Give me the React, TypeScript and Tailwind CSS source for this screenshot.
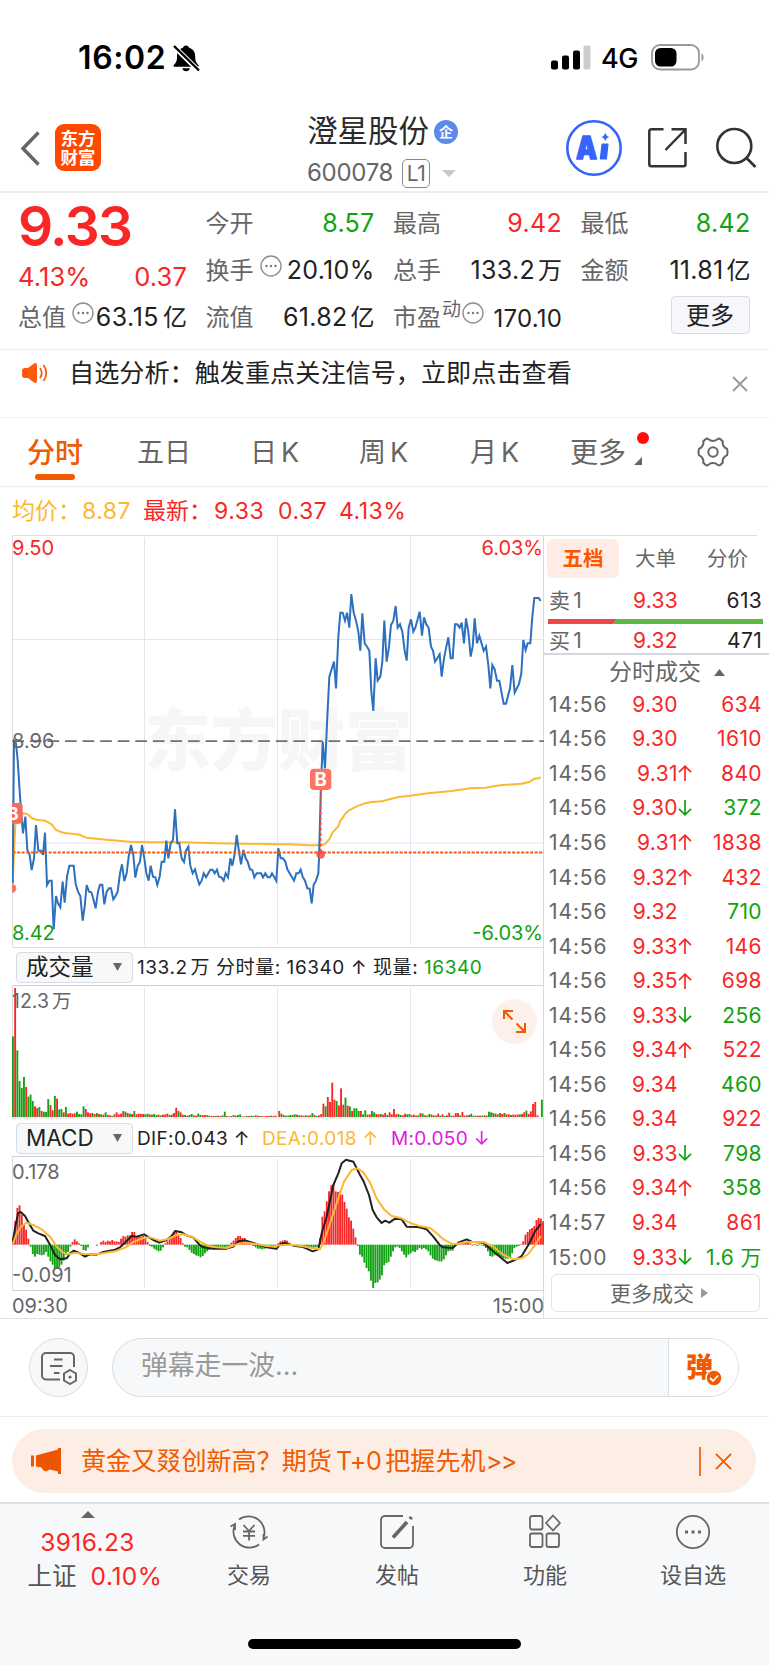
import React, { useState } from "react";

/* ---------- intraday data (x: 3 units per pixel) ---------- */

const SESSION_SHIFT = 810;

const priceMorning =
    "38,1060 42,632 48,640 53,690 62,830 69,910 76,860 82,960 89,975 95,1020 102,985 108,885 115,962 124,962 129,975 135,908 141,1065 148,1052 155,1052 161,1198 168,1098 174,1120 181,1132 188,1055 194,1118 201,1040 208,1007 221,1007 227,1062 234,1085 241,1098 248,1172 254,1130 260,1065 267,1085 274,1087 280,1107 287,1135 294,1085 300,1064 307,1064 313,1123 320,1085 327,1075 333,1075 340,1108 347,1097 353,1085 360,1030 366,1003 373,1053 380,1030 386,980 393,945 400,975 406,1043 413,1008 420,995 426,945 433,985 439,1030 446,1052 452,1007 459,1040 466,1042 472,1065 479,1040 485,995 493,995 499,932 505,985 512,940 519,930 525,838 532,940 538,940 545,985 552,996 558,962 565,950 571,1007 578,1030 585,1018 591,1042 598,1063 605,1052 611,1030 618,1042 625,1030 631,1019 638,1019 644,1030 651,1019 657,1040 664,1042 671,1052 677,1030 684,1042 691,985 697,1007 704,972 710,915 717,965 723,1003 730,960 737,985 743,995 750,1018 757,1020 763,1042 770,1030 783,1030 789,1042 796,1030 803,1042 810,1042 816,1030 823,1042 829,1053";
const priceAfternoon =
    "25,955 32,985 39,985 46,995 52,1018 72,1052 79,1030 86,1030 92,1019 98,1040 105,1052 112,1075 119,1076 125,1120 131,1064 138,1052 145,1030 147,985 152,800 158,635 165,715 172,560 178,440 192,395 198,475 205,320 211,248 218,248 225,272 231,248 238,293 244,192 251,248 258,272 265,305 271,362 277,250 284,340 291,350 298,362 304,485 310,543 317,385 323,452 331,440 337,395 343,272 350,395 357,350 363,285 370,272 377,228 383,293 390,283 397,305 404,362 410,392 416,293 423,268 430,305 436,293 449,245 456,317 462,262 469,283 476,294 483,350 489,362 495,395 502,385 509,373 515,440 522,385 529,350 535,322 542,385 548,385 555,283 562,283 569,293 575,278 582,340 588,265 595,305 602,380 608,350 614,265 621,340 628,317 641,362 648,350 655,405 661,475 667,405 674,418 681,452 688,452 694,485 701,521 708,521 720,475 727,405 734,488 747,462 754,430 760,330 767,360 773,340 781,340 787,260 793,204 806,204 812,213";

const avgMorning =
    "38,1060 46,885 55,860 68,850 82,852 96,865 110,869 135,872 155,883 168,900 180,905 195,909 240,914 250,920 260,923 320,929 390,935 450,937 550,937 650,940 740,941 829,943";
const avgAfternoon =
    "0,943 60,943 120,946 152,946 165,942 178,928 187,908 205,889 211,872 218,864 225,852 237,841 260,829 285,820 305,816 335,814 365,806 385,801 420,797 480,789 545,783 600,775 645,773 690,766 755,761 780,755 793,746 806,745 812,741";

const difMorning =
    "38,905 46,860 54,820 62,816 75,828 90,855 100,872 115,880 135,888 150,914 165,945 180,958 200,955 210,940 222,932 240,940 255,950 270,943 290,944 310,936 345,929 360,922 375,908 395,888 410,890 432,883 448,893 460,900 478,908 500,900 515,888 525,873 545,877 560,886 580,893 598,914 610,922 640,926 680,926 700,920 715,904 735,901 755,907 775,914 800,922 829,926";
const difAfternoon =
    "20,926 30,913 45,909 70,917 95,920 110,926 128,934 145,928 155,880 170,830 190,735 205,700 215,670 228,659 250,665 270,705 280,722 297,765 308,810 320,832 335,849 345,842 358,848 375,836 395,838 410,860 445,861 470,868 490,890 510,916 520,922 548,924 565,908 590,898 605,905 640,908 665,930 695,955 712,969 735,960 755,948 775,915 795,875 812,852";
const deaMorning =
    "38,912 50,880 65,858 80,848 100,855 125,868 150,890 170,920 190,938 205,943 225,938 250,942 290,943 345,934 375,923 400,906 430,894 450,892 480,902 505,897 530,885 550,883 575,890 600,905 625,918 650,922 680,924 710,913 740,908 770,912 800,918 829,920";
const deaAfternoon =
    "20,917 30,916 60,914 95,918 130,925 150,928 160,910 175,865 200,790 222,725 245,690 262,685 280,697 300,728 320,775 342,808 365,828 395,835 420,849 445,857 480,864 500,880 520,898 545,911 560,912 590,906 640,906 670,920 700,944 730,958 755,955 775,942 795,915 812,888";

// positive = red bar, negative = green bar
const volMorning = [
    -242, 387, -200, -108, -87, -120, 90, -61, -67, -48, 32, 27, -30, 18, -16, -15, -54, 36, 20, -63,
    55, -23, -24, 14, -30, 10, 12, 10, 11, -16, -9, -8, -32, 24, 14, 11, -12, 9, -12, 9,
    -8, 7, -14, 6, 5, -3, 8, 14, 7, 10, 18, -16, 12, -10, 9, -18, 8, 10, 9, 9,
    -8, -10, 8, -7, -9, -6, 7, -5, 7, 8, 10, -6, 7, 12, 28, -18, 14, 7, -6, 4,
    -6, -9, 5, 4, -10, -6, 5, 6, 5, -4, 3, 3, -3, 4, 3, -5, -16, 3, 2, -3,
    6, -4, -6, -8, 2, 2, -3, 3, -4, -3, 5, 4, -3, 3, 2, 3, 3, -4, 3, 4,
];
const volAfternoon = [
    18, -10, 6, -4, -4, -6, -6, -8, 7, -5, 5, -4, 5, 4, -5, -12, 6, -3, 5, 9,
    40, -32, 60, 45, 103, 52, -48, 35, 86, 37, -58, 34, -32, 18, -26, -26, -18, 18, -8, -20,
    7, 8, -18, -14, 9, 8, -9, 7, 12, -6, 14, 8, 24, 8, -9, -6, 5, 10, -8, -9,
    5, 7, 4, -5, 12, -10, 5, -4, -9, 7, -5, 4, 10, -4, 8, -3, 5, 13, -4, 4,
    12, 12, -5, 15, 4, 5, -6, -10, 4, -4, 4, 4, -4, 5, 4, -16, -14, -12, 10, -8,
    12, 9, -12, 8, 8, -6, 7, 7, 7, -8, 9, 14, -19, 9, 17, 39, 45, 5, 0, -52,
];

const macdMorning = [
    20, 70, 110, 118, 90, 62, 45, 18, -6, -28, -36, -28, -30, -32, -30, -22, -36, -50, -60, -72,
    -72, -68, -60, -48, -30, -22, -6, 8, 16, 10, 4, -4, -16, -18, -8, 0, 0, 0, -3, 0,
    8, 12, 8, 12, 10, 14, 10, 10, 8, 18, 26, 24, 28, 28, 38, 38, 26, 26, 24, 26,
    20, 8, -4, -6, -12, -16, -20, -18, -8, 4, 10, 18, 30, 34, 42, 28, 20, 4, -6, -8,
    -16, -24, -28, -32, -34, -38, -34, -26, -20, -16, -12, -10, -8, -8, -8, -8, -8, -6, -4, 6,
    12, 20, 26, 26, 20, 20, 14, 10, 2, -4, -8, -12, -12, -14, -12, -10, -10, -8, -6, -3,
];
const macdAfternoon = [
    4, 10, 12, 14, 12, 6, 2, -2, -3, -4, -4, -4, -4, -6, -8, -10, -10, -8, -6, 20,
    84, 100, 130, 160, 178, 182, 160, 158, 160, 150, 128, 108, 82, 72, 48, 22, -4, -30, -36, -54,
    -70, -80, -108, -130, -115, -113, -105, -92, -62, -55, -52, -36, -20, -8, -6, -10, -20, -30, -38, -30,
    -26, -20, -22, -16, -10, -14, -10, -14, -20, -32, -42, -46, -48, -50, -50, -44, -32, -20, -18, -18,
    -4, 4, 6, 8, 8, 8, 6, 4, -3, 2, -3, -2, -2, -4, -10, -20, -34, -36, -32, -32,
    -34, -38, -40, -42, -42, -40, -26, -10, -6, -4, 2, 10, 30, 38, 46, 50, 56, 74, 80, 78, 70,
];

const shift = (points: string) =>
    points
        .split(" ")
        .map((p) => {
            const [x, y] = p.split(",").map(Number);
            return `${x + SESSION_SHIFT},${y}`;
        })
        .join(" ");

const pricePoints = `${priceMorning} ${shift(priceAfternoon)}`;
const avgPoints = `${avgMorning} ${shift(avgAfternoon)}`;
const difPoints = `${difMorning} ${shift(difAfternoon)}`;
const deaPoints = `${deaMorning} ${shift(deaAfternoon)}`;

const RED = "#f92626";
const GREEN = "#10a210";

const trades = [
    { time: "14:56", price: "9.30", dir: "", vol: "634", up: true },
    { time: "14:56", price: "9.30", dir: "", vol: "1610", up: true },
    { time: "14:56", price: "9.31", dir: "up", vol: "840", up: true },
    { time: "14:56", price: "9.30", dir: "down", vol: "372", up: false },
    { time: "14:56", price: "9.31", dir: "up", vol: "1838", up: true },
    { time: "14:56", price: "9.32", dir: "up", vol: "432", up: true },
    { time: "14:56", price: "9.32", dir: "", vol: "710", up: false },
    { time: "14:56", price: "9.33", dir: "up", vol: "146", up: true },
    { time: "14:56", price: "9.35", dir: "up", vol: "698", up: true },
    { time: "14:56", price: "9.33", dir: "down", vol: "256", up: false },
    { time: "14:56", price: "9.34", dir: "up", vol: "522", up: true },
    { time: "14:56", price: "9.34", dir: "", vol: "460", up: false },
    { time: "14:56", price: "9.34", dir: "", vol: "922", up: true },
    { time: "14:56", price: "9.33", dir: "down", vol: "798", up: false },
    { time: "14:56", price: "9.34", dir: "up", vol: "358", up: false },
    { time: "14:57", price: "9.34", dir: "", vol: "861", up: true },
    { time: "15:00", price: "9.33", dir: "down", vol: "1.6 万", up: false },
];

/* ---------- small pieces ---------- */

const Bars = ({ data, start, base }: { data: number[]; start: number; base: number }) => (
    <>
        {data.map((v, i) => (
            <rect
                key={i}
                x={start + i * 6.62}
                y={base - Math.abs(v)}
                width={5.6}
                height={Math.abs(v)}
                fill={v > 0 ? RED : GREEN}
            />
        ))}
    </>
);

const SignedBars = ({ data, start, base }: { data: number[]; start: number; base: number }) => (
    <>
        {data.map((v, i) => (
            <rect
                key={i}
                x={start + i * 6.62}
                y={v > 0 ? base - v : base}
                width={5.6}
                height={Math.abs(v)}
                fill={v > 0 ? RED : GREEN}
            />
        ))}
    </>
);

const GridLines = ({ top, bottom }: { top: number; bottom: number }) => (
    <g stroke="#e3e6f0" strokeWidth={3}>
        <path d={`M433.5 ${top}V${bottom}M832.5 ${top}V${bottom}M1231.5 ${top}V${bottom}`} />
    </g>
);

const Dots = () => (
    <svg className="h-[22px] w-[22px] shrink-0" viewBox="0 0 22 22">
        <circle cx="11" cy="11" r="10" fill="none" stroke="#8f8f8f" strokeWidth="1.4" />
        <circle cx="6.5" cy="11" r="1.2" fill="#777" />
        <circle cx="11" cy="11" r="1.2" fill="#777" />
        <circle cx="15.5" cy="11" r="1.2" fill="#777" />
    </svg>
);

const Arrow = ({ dir }: { dir: string }) => (
    <svg
        className={dir === "up" ? "h-[16px] w-[14px]" : "h-[16px] w-[14px] rotate-180"}
        viewBox="0 0 14 16"
        fill="none"
        stroke={dir === "up" ? RED : GREEN}
        strokeWidth="1.7"
    >
        <path d="M7 16V1.5M1 7.2L7 1.2L13 7.2" />
    </svg>
);

const Quote = ({
    label,
    value,
    unit,
    color = "text-[#222]",
}: {
    label: React.ReactNode;
    value: string;
    unit?: string;
    color?: string;
}) => (
    <div className="flex h-[47px] items-center justify-between whitespace-nowrap leading-none">
        <span className="flex items-center text-[24px] text-[#666]">{label}</span>
        <span className={`mr-[-1px] flex items-center text-[25px] tracking-[0.3px] ${color}`}>
            {value}
            {unit && <span className="ml-[3px] text-[24px] tracking-normal">{unit}</span>}
        </span>
    </div>
);

const Selector = ({ text }: { text: string }) => (
    <div className="flex h-[31px] w-[117px] items-center justify-between rounded-[4px] border border-[#d8dce4] bg-[#f7f8fa] pl-[9px] pr-[10px] text-[22.5px] leading-none tracking-normal text-[#222]">
        {text}
        <svg className="h-[8px] w-[9px]" viewBox="0 0 9 8">
            <path d="M0 0H9L4.5 8Z" fill="#666" />
        </svg>
    </div>
);

const NavItem = ({ label, children }: { label: string; children: React.ReactNode }) => (
    <div className="flex flex-1 flex-col items-center">
        <svg
            className="mt-[10px] h-[36px] w-[40px]"
            viewBox="0 0 40 36"
            fill="none"
            stroke="#666"
            strokeWidth="1.8"
        >
            {children}
        </svg>
        <span className="mt-[13px] text-[22px] leading-[24px] text-[#555]">{label}</span>
    </div>
);

/* ---------- page ---------- */

const App: React.FC = () => {
    const [period, setPeriod] = useState("分时");

    return (
        <div className="flex h-[1665px] w-[769px] flex-col overflow-hidden bg-white font-['Inter','Noto_Sans_CJK_SC',sans-serif] text-[#222]">
            {/* Status bar */}
            <div className="flex h-[115px] shrink-0 items-center pl-[78px] leading-none">
                <span className="w-[95px] text-[32px] font-semibold tracking-[0.6px] text-black">16:02</span>
                <svg className="h-[28px] w-[28px]" viewBox="0 0 28 28">
                    <path
                        d="M13 1.5c1.8 0 2.6 1 3 2.2 4 1 6.200 4.200 6.200 8.600 0 5 1 6.500 3.200 8.700 .6 .7 .2 1.800-.9 1.800H1.700C.5 22.800 .1 21.600 .9 20.900 3.300 18.600 4 17 4 12.300c0-4.400 2.200-7.500 6-8.600 .4-1.200 1.200-2.200 3-2.200ZM9.300 24.300h7.600c-.4 1.800-1.900 3-3.800 3s-3.400-1.200-3.800-3Z"
                        fill="#000"
                    />
                    <path d="M1 2.500L26 27" stroke="#fff" strokeWidth="5" />
                    <path d="M1 2L26 26.500" stroke="#000" strokeWidth="2.400" />
                </svg>
                <svg className="ml-[350px] h-[25px] w-[40px]" viewBox="0 0 40 25">
                    <rect x="0" y="15.500" width="7" height="9" rx="2" fill="#000" />
                    <rect x="11" y="10.500" width="7" height="14" rx="2" fill="#000" />
                    <rect x="22" y="5.500" width="7" height="19" rx="2" fill="#000" />
                    <rect x="32.500" y="0.500" width="7" height="24" rx="2" fill="#ccc" />
                </svg>
                <span className="ml-[10px] w-[50px] pt-[1px] text-[27px] font-medium tracking-[-0.5px] text-black">4G</span>
                <svg className="h-[27px] w-[54px]" viewBox="0 0 54 27">
                    <rect x="1" y="1" width="47" height="24.500" rx="8" fill="none" stroke="#999" strokeWidth="1.800" />
                    <rect x="4" y="4" width="21.500" height="18.500" rx="5.500" fill="#000" />
                    <path d="M50.500 9.500c2.800 .8 2.800 7 0 7.800Z" fill="#999" />
                </svg>
            </div>

            {/* Title bar */}
            <div className="flex h-[78px] shrink-0 border-b-2 border-[#eee] pl-[20px]">
                <svg className="mt-[16px] h-[35px] w-[20px]" viewBox="0 0 20 35" fill="none" stroke="#666" strokeWidth="3.500">
                    <path d="M18.500 1.500L3 17.500L18.500 33.500" />
                </svg>
                <div className="ml-[15px] mt-[9px] flex h-[47px] w-[46px] flex-col items-center justify-center rounded-[9px] bg-[#ff4800] text-[17.5px] font-bold leading-[19px] text-white">
                    <span>东方</span>
                    <span>财富</span>
                </div>
                <div className="ml-[206px] w-[259px] pt-[1px]">
                    <div className="flex h-[31px] items-center text-[30.500px] leading-none text-[#2b2b2b]">
                        澄星股份
                        <span className="ml-[5px] flex h-[24px] w-[24px] items-center justify-center rounded-full bg-[#5b8ae8] text-[14px] font-bold text-white">
                            企
                        </span>
                    </div>
                    <div className="mt-[11px] flex h-[30px] items-center text-[24px] leading-none text-[#666]">
                        <span className="w-[95px] tracking-[-0.300px]">600078</span>
                        <span className="flex h-[29px] w-[28px] items-center justify-center rounded-[5px] border-[1.500px] border-[#888] text-[21px] tracking-[-0.5px]">
                            L1
                        </span>
                        <svg className="ml-[12px] h-[7px] w-[14px]" viewBox="0 0 14 7">
                            <path d="M0 0H14L7 7Z" fill="#c8c8c8" />
                        </svg>
                    </div>
                </div>
                <svg className="mt-[5px] h-[56px] w-[56px]" viewBox="0 0 56 56">
                    <circle cx="28" cy="28" r="26.700" fill="none" stroke="#3464fb" strokeWidth="2.600" />
                    <text x="10" y="38.500" fontSize="31" fontWeight="900" fill="#3464fb" stroke="#3464fb" strokeWidth="1.500" strokeLinejoin="round" textLength="21" lengthAdjust="spacingAndGlyphs">
                        A
                    </text>
                    <path d="M36.200 24.300H41.800L40.200 38.800H34.500Z" fill="#3464fb" stroke="#3464fb" strokeWidth="1.500" strokeLinejoin="round" />
                    <path d="M39.300 12.500c.8 3 1.500 3.700 4.500 4.500-3 .8-3.700 1.500-4.500 4.500-.8-3-1.500-3.700-4.500-4.500 3-.8 3.700-1.500 4.500-4.500Z" fill="#3464fb" />
                </svg>
                <svg className="ml-[26px] mt-[13px] h-[41px] w-[41px]" viewBox="0 0 41 41" fill="none" stroke="#333" strokeWidth="2.500">
                    <path d="M15.500 1.300H3.300a2 2 0 0 0-2 2V36.300a2 2 0 0 0 2 2H35.500a2 2 0 0 0 2-2V24" />
                    <path d="M17.500 22L37 2M23.500 1.300H37.500V16" />
                </svg>
                <svg className="ml-[27px] mt-[12px] h-[41px] w-[41px]" viewBox="0 0 41 41" fill="none" stroke="#333" strokeWidth="2.600">
                    <circle cx="18.300" cy="19" r="17" />
                    <path d="M30.500 31L39.500 40" />
                </svg>
            </div>

            {/* Quote summary */}
            <div className="grid h-[157px] shrink-0 grid-cols-[168px_168px_168px_169px] gap-x-[19.500px] border-b border-[#eee] pl-[18px] pt-[7px]">
                <div>
                    <div className="flex h-[52px] items-center text-[55px] font-semibold leading-none tracking-[-1.600px] text-[#f92626]">
                        9.33
                    </div>
                    <div className="mr-[-1px] flex h-[42px] items-end justify-between pb-[5px] text-[25.500px] leading-none tracking-[0.100px] text-[#f92626]">
                        <span>4.13%</span>
                        <span>0.37</span>
                    </div>
                    <div className="mr-[-1px] flex h-[47px] items-center whitespace-nowrap text-[24px] leading-none">
                        <span className="w-[54px] text-[#666]">总值</span>
                        <span className="mt-[-9px]">
                            <Dots />
                        </span>
                        <span className="ml-auto text-[25px] tracking-[0.500px]">63.15</span>
                        <span className="ml-[4px]">亿</span>
                    </div>
                </div>
                <div>
                    <Quote label="今开" value="8.57" color="text-[#10a210]" />
                    <Quote
                        label={
                            <>
                                换手
                                <span className="ml-[6px] mt-[-10px]">
                                    <Dots />
                                </span>
                            </>
                        }
                        value="20.10%"
                    />
                    <Quote label="流值" value="61.82" unit="亿" />
                </div>
                <div>
                    <Quote label="最高" value="9.42" color="text-[#f92626]" />
                    <Quote label="总手" value="133.2" unit="万" />
                    <div className="mr-[-1px] flex h-[47px] items-center whitespace-nowrap text-[24px] leading-none">
                        <span className="text-[#666]">市盈</span>
                        <span className="mt-[-16px] ml-[1px] w-[20px] text-[19px] text-[#666]">动</span>
                        <span className="mt-[-9px]">
                            <Dots />
                        </span>
                        <span className="ml-auto mt-[2px] text-[24px] tracking-[0.200px]">170.10</span>
                    </div>
                </div>
                <div>
                    <Quote label="最低" value="8.42" color="text-[#10a210]" />
                    <Quote label="金额" value="11.81" unit="亿" />
                    <div className="flex justify-end pt-[2px]">
                        <button className="h-[38px] w-[79px] rounded-[4px] border border-[#d8dce4] bg-[#f6f7fa] pt-[2px] text-[24px] leading-none text-[#222]">
                            更多
                        </button>
                    </div>
                </div>
            </div>

            {/* Signal notice */}
            <div className="flex h-[68px] shrink-0 border-b border-[#f0f0f0] pl-[22px] leading-none">
                <svg className="mt-[12px] h-[22px] w-[27px]" viewBox="0 0 27 22">
                    <path d="M0 8.500Q0 6 3 6H6L12 1.500Q15 0 15 3.500V18.500Q15 22 12 20.500L6 16H3Q0 16 0 13.500Z" fill="#fe5a0b" />
                    <path d="M18 6Q21.500 11 18 16M21.500 3Q27 11 21.500 19" fill="none" stroke="#fe5a0b" strokeWidth="1.800" />
                </svg>
                <span className="ml-[20px] mt-[11px] text-[25.150px]">自选分析：触发重点关注信号，立即点击查看</span>
                <svg className="ml-auto mr-[21px] mt-[26px] h-[16px] w-[16px]" viewBox="0 0 16 16" fill="none" stroke="#999" strokeWidth="1.900">
                    <path d="M1 1L15 15M15 1L1 15" />
                </svg>
            </div>

            {/* Period tabs */}
            <div className="flex h-[69px] shrink-0 items-start border-b border-[#eee] pt-[19px] text-[27px] leading-[32px] text-[#666]">
                <button
                    onClick={() => setPeriod("分时")}
                    className="ml-[27px] flex w-[110px] flex-col items-start text-[28px] font-medium text-[#f05a00]"
                >
                    分时
                    {period === "分时" && <span className="ml-[8px] mt-[5px] h-[6px] w-[40px] rounded-full bg-[#f05a00]" />}
                </button>
                <span className="w-[113px]">五日</span>
                <span className="w-[109px]">
                    日<span className="ml-[4px]">K</span>
                </span>
                <span className="w-[111px]">
                    周<span className="ml-[4px]">K</span>
                </span>
                <span className="w-[100px]">
                    月<span className="ml-[4px]">K</span>
                </span>
                <span className="w-[64px] text-[28px]">更多</span>
                <span className="flex w-[63px] flex-col">
                    <span className="ml-[3px] mt-[-5px] h-[12px] w-[12px] rounded-full bg-[#ff0d0d]" />
                    <svg className="mt-[13px] h-[8px] w-[8px]" viewBox="0 0 8 8">
                        <path d="M8 0V8H0Z" fill="#666" />
                    </svg>
                </span>
                <svg className="h-[30px] w-[32px]" viewBox="0 0 32 30" fill="none" stroke="#666" strokeWidth="2">
                    <path d="M11.500 2.200c1 1.200 2.600 1.700 4.500 1.700s3.500-.5 4.500-1.700q1.500-1.200 3 .1l2.300 2.100c-.5 1.800 0 3.300 .9 4.700 .9 1.400 2 2.300 3.300 2.700q1 3.200 0 6.400c-1.300 .4-2.400 1.300-3.300 2.700-.9 1.400-1.400 2.900-.9 4.700l-2.300 2.100q-1.500 1.300-3 .1c-1-1.200-2.600-1.700-4.500-1.700s-3.500 .5-4.500 1.700q-1.500 1.200-3-.1l-2.300-2.100c.5-1.800 0-3.300-.9-4.700-.9-1.400-2-2.300-3.300-2.700q-1-3.200 0-6.400c1.300-.4 2.400-1.300 3.300-2.700 .9-1.400 1.400-2.900 .9-4.700l2.300-2.100q1.500-1.300 3-.1Z" />
                    <circle cx="16" cy="15" r="4.700" />
                </svg>
            </div>

            {/* Average / latest line */}
            <div className="flex h-[48px] shrink-0 items-center pl-[12px] text-[23px] leading-none tracking-[0.500px] text-[#f92626]">
                <span className="w-[70px] tracking-normal text-[#fdb832]">均价：</span>
                <span className="w-[61px] text-[#fdb832]">8.87</span>
                <span className="w-[71px] tracking-normal">最新：</span>
                <span className="w-[64px]">9.33</span>
                <span className="w-[61px]">0.37</span>
                <span>4.13%</span>
            </div>

            {/* Charts + order book */}
            <div className="flex h-[784px] shrink-0 border-b border-[#dfe2e6]">
                <div className="w-[544px] border-r border-[#d8dae0] pl-[12px]">
                    {/* Price chart */}
                    <div className="relative h-[413px]">
                        <span className="absolute left-[132px] top-[162px] text-[67px] font-black leading-[88px] text-[#f6f6f6]">
                            东方财富
                        </span>
                        <svg className="absolute left-0 top-0 h-[413px] w-[532px]" viewBox="36 15 1596 1239" fill="none">
                            <GridLines top={22} bottom={1246} />
                            <path d="M36 328.500H1632M36 939H1632" stroke="#e3e6f0" strokeWidth="3" />
                            <path d="M37.500 16.500H1632M37.500 1252.500H1632M37.500 15V1252" stroke="#dedfe3" strokeWidth="3" />
                            <path d="M36 633.500H1632" stroke="#707070" strokeWidth="5" strokeDasharray="35 17.700" strokeDashoffset="-1" />
                            <polyline points={avgPoints} stroke="#fdb832" strokeWidth="6" strokeLinejoin="round" />
                            <polyline points={pricePoints} stroke="#2d70be" strokeWidth="6" strokeLinejoin="miter" />
                            <path d="M38 967.500H1632" stroke="#f4590c" strokeWidth="6" strokeDasharray="9 4.500" />
                            <path d="M962 780V970" stroke="#f04e40" strokeWidth="5" strokeDasharray="10 6" />
                            <circle cx="962" cy="973" r="13" fill="#f04e40" fillOpacity="0.850" />
                            <path d="M36 1062a13 13 0 0 1 0 26Z" fill="#fd7464" />
                            <rect x="930" y="716" width="64" height="64" rx="12" fill="#fd7464" />
                            <text x="962" y="768" fontSize="56" fontWeight="700" fill="#fff" textAnchor="middle">
                                B
                            </text>
                            <path d="M36 819H58a10 10 0 0 1 10 10V871a10 10 0 0 1-10 10H36Z" fill="#f56a5e" />
                            <text x="38" y="869" fontSize="54" fontWeight="700" fill="#fff" textAnchor="middle">
                                B
                            </text>
                        </svg>
                        <span className="absolute left-0 top-[3px] text-[20px] leading-[20px] text-[#f92626]">9.50</span>
                        <span className="absolute right-0 top-[3px] text-[20px] leading-[20px] text-[#f92626]">6.03%</span>
                        <span className="absolute left-0 top-[196px] text-[20px] leading-[20px] text-[#666]">8.96</span>
                        <span className="absolute left-0 top-[388px] text-[20px] leading-[20px] text-[#10a210]">8.42</span>
                        <span className="absolute right-0 top-[388px] text-[20px] leading-[20px] text-[#10a210]">-6.03%</span>
                    </div>

                    {/* Volume */}
                    <div className="flex h-[37px] items-center whitespace-pre pl-[4px] pt-[1px] text-[19px] leading-none tracking-[0.550px]">
                        <Selector text="成交量" />
                        <span className="ml-[4px]">133.2</span>
                        <span className="ml-[3px]">万 分时量: 16340 ↑ 现量: </span>
                        <span className="text-[#10a210]">16340</span>
                    </div>
                    <div className="relative h-[134px]">
                        <svg className="absolute left-0 top-0 h-[134px] w-[532px]" viewBox="36 135 1596 402" fill="none">
                            <path d="M36 136.500H1632" stroke="#ced1d6" strokeWidth="3" />
                            <path d="M36 534H1632M37.500 136V534" stroke="#dedfe3" strokeWidth="3" />
                            <GridLines top={144} bottom={531} />
                            <Bars data={volMorning} start={36} base={531} />
                            <Bars data={volAfternoon} start={835} base={531} />
                        </svg>
                        <span className="absolute left-0 top-[6px] text-[19.500px] leading-[20px] text-[#666]">
                            12.3<span className="ml-[3px]">万</span>
                        </span>
                        <span className="absolute right-[6px] top-[14px] flex h-[45px] w-[45px] items-center justify-center rounded-full bg-[#fdf0ea]">
                            <svg className="h-[23px] w-[23px]" viewBox="0 0 23 23" fill="none" stroke="#f05a00" strokeWidth="2">
                                <path d="M1 9V1H10M1 1L9.500 9.500M22 13V22H13M22 22L13.500 13.500" />
                            </svg>
                        </span>
                    </div>

                    {/* MACD */}
                    <div className="flex h-[37px] items-center whitespace-pre pl-[4px] pt-[1px] text-[19px] leading-none tracking-[0.350px]">
                        <Selector text="MACD" />
                        <span className="ml-[4px] w-[125px]">DIF:0.043 ↑</span>
                        <span className="w-[129px] text-[#fdb832]">DEA:0.018 ↑</span>
                        <span className="text-[#e218e2]">M:0.050 ↓</span>
                    </div>
                    <div className="relative h-[135px]">
                        <svg className="absolute left-0 top-0 h-[135px] w-[532px]" viewBox="36 648 1596 405" fill="none">
                            <path d="M36 649.500H1632M36 1051.500H1632" stroke="#ced1d6" strokeWidth="3" />
                            <path d="M37.500 650V1050" stroke="#dedfe3" strokeWidth="3" />
                            <GridLines top={657} bottom={1044} />
                            <SignedBars data={macdMorning} start={36} base={914} />
                            <SignedBars data={macdAfternoon} start={832} base={914} />
                            <polyline points={difPoints} stroke="#222" strokeWidth="6" strokeLinejoin="round" />
                            <polyline points={deaPoints} stroke="#fdb832" strokeWidth="6" strokeLinejoin="round" />
                        </svg>
                        <span className="absolute left-0 top-[6px] text-[20px] leading-[20px] text-[#666]">0.178</span>
                        <span className="absolute left-0 top-[109px] text-[20px] leading-[20px] text-[#666]">-0.091</span>
                    </div>
                    <div className="flex h-[26px] items-center justify-between pt-[4px] text-[20px] leading-none text-[#666]">
                        <span>09:30</span>
                        <span className="mr-[-1px]">15:00</span>
                    </div>
                </div>

                {/* Order book */}
                <div className="w-[225px]">
                    <div className="mr-[12px] border-t border-[#dedfe3]" />
                    <div className="flex h-[42px] pl-[3px] pt-[3px] text-[20.500px] leading-[40px] text-[#666]">
                        <span className="h-[39px] w-[72px] rounded-[6px] bg-[#ffede5] text-center font-bold text-[#fd5602]">五档</span>
                        <span className="ml-[16px] w-[72px]">大单</span>
                        <span>分价</span>
                    </div>
                    <div className="grid h-[41px] grid-cols-[84px_60px_1fr] items-center pl-[5px] pr-[7px] pt-[4px] text-[21px] leading-none tracking-[0.300px]">
                        <span className="text-[#666]">
                            卖<span className="ml-[3px]">1</span>
                        </span>
                        <span className="text-[#f92626]">9.33</span>
                        <span className="text-right">613</span>
                    </div>
                    <svg className="ml-[4px] block h-[5px] w-[215px]" viewBox="0 0 215 5">
                        <path d="M0 0H69L65 5H0Z" fill="#ed4848" />
                        <path d="M69 0H215V5H65Z" fill="#5bb943" />
                    </svg>
                    <div className="grid h-[31px] grid-cols-[84px_60px_1fr] items-center border-b-2 border-[#d4d7dd] pl-[5px] pr-[7px] pt-[3px] text-[21px] leading-none tracking-[0.300px]">
                        <span className="text-[#666]">
                            买<span className="ml-[3px]">1</span>
                        </span>
                        <span className="text-[#f92626]">9.32</span>
                        <span className="text-right">471</span>
                    </div>
                    <div className="flex h-[32px] items-center pl-[65px] pt-[2px] text-[23px] leading-none text-[#666]">
                        分时成交
                        <svg className="ml-[13px] h-[7px] w-[11px]" viewBox="0 0 11 7">
                            <path d="M0 7H11L5.500 0Z" fill="#666" />
                        </svg>
                    </div>
                    {trades.map((t, i) => (
                        <div key={i} className="flex h-[34.550px] items-center pl-[5px] pr-[7px] text-[21px] leading-none">
                            <span className="w-[71px] tracking-[0.900px] text-[#666]">{t.time}</span>
                            <span className="w-[58px] text-right tracking-[0.400px] text-[#f92626]">{t.price}</span>
                            <span className="w-[14px]">{t.dir && <Arrow dir={t.dir} />}</span>
                            <span className={t.up ? "ml-auto tracking-[0.400px] text-[#f92626]" : "ml-auto tracking-[0.400px] text-[#10a210]"}>
                                {t.vol}
                            </span>
                        </div>
                    ))}
                    <div className="ml-[7px] flex h-[38px] w-[209px] items-center rounded-[6px] border border-[#e4e4e6] pl-[58px] text-[21px] leading-none text-[#666]">
                        更多成交
                        <svg className="ml-[7px] h-[10px] w-[7px]" viewBox="0 0 7 10">
                            <path d="M0 0V10L7 5Z" fill="#999" />
                        </svg>
                    </div>
                </div>
            </div>

            {/* Comment input */}
            <div className="flex h-[98px] shrink-0 border-b border-[#eee] pl-[29px] pt-[19px]">
                <div className="flex h-[59px] w-[59px] items-center justify-center rounded-full border border-[#d8dce4] bg-[#f7f8fa]">
                    <svg className="h-[34px] w-[38px]" viewBox="0 0 38 34" fill="none" stroke="#666" strokeWidth="2">
                        <path d="M20 28.500H6a4 4 0 0 1-4-4V6a4 4 0 0 1 4-4H30a4 4 0 0 1 4 4V16" />
                        <path d="M14 8.500H22.500M10 15H22.500M14 22H19.500" />
                        <path d="M30 19L36 22.500V29.500L30 33L24 29.500V22.500Z" />
                        <circle cx="30" cy="26" r="1.600" fill="#666" stroke="none" />
                    </svg>
                </div>
                <div className="ml-[24px] flex h-[59px] w-[627px] overflow-hidden rounded-full border border-[#d8dce4] bg-[#f7f8fa]">
                    <span className="flex-1 pl-[28px] pt-[12px] text-[26.800px] leading-[28px] text-[#999]">弹幕走一波...</span>
                    <div className="relative w-[70px] border-l border-[#d8dce4] bg-white pl-[17px] pt-[14px] text-[27px] font-black leading-[30px] text-[#f05a00]">
                        弹
                        <svg className="absolute left-[36px] top-[30px] h-[18px] w-[18px]" viewBox="0 0 18 18">
                            <circle cx="9" cy="9" r="8" fill="#f05a00" stroke="#fff" strokeWidth="1.500" />
                            <path d="M5 9L8 12L13 6.500" fill="none" stroke="#fff" strokeWidth="1.800" />
                        </svg>
                    </div>
                </div>
            </div>

            {/* Promo banner */}
            <div className="flex h-[85px] shrink-0 pl-[12px] pt-[12px]">
                <div className="flex h-[64px] w-[744px] items-center rounded-full bg-[#fdeee5] pl-[19px] text-[25.100px] leading-none text-[#f05a00]">
                    <svg className="h-[26px] w-[30px]" viewBox="0 0 30 26" fill="#ed5500">
                        <path d="M0 7.500H3V18.500H0ZM5 7.500L27 1.500V0H30V26H27V23.500L18.500 21.500L15.500 23.500Q12 23 10.500 19.500L5 18.500Z" />
                    </svg>
                    <span className="ml-[20px] mt-[1px] whitespace-nowrap">
                        黄金又叕创新高？期货<span className="mx-[4px] tracking-[-0.500px]">T+0</span>把握先机
                        <span className="tracking-[-1.500px]">&gt;&gt;</span>
                    </span>
                    <span className="ml-auto h-[29px] w-[2px] bg-[#f0722c]" />
                    <svg className="ml-[14px] mr-[24px] h-[17px] w-[17px]" viewBox="0 0 18 18" fill="none" stroke="#f05a00" strokeWidth="2">
                        <path d="M1 1L17 17M17 1L1 17" />
                    </svg>
                </div>
            </div>

            {/* Bottom navigation */}
            <div className="flex flex-1 flex-col items-center border-t-2 border-[#dcdfe4] bg-[#f7f8fa]">
                <div className="flex w-full">
                    <div className="flex w-[175px] flex-col items-center">
                        <svg className="mt-[7px] h-[7px] w-[14px]" viewBox="0 0 14 7">
                            <path d="M0 7H14L7 0Z" fill="#666" />
                        </svg>
                        <span className="mt-[11px] text-[24.500px] leading-[26px] tracking-[0.400px] text-[#f92626]">3916.23</span>
                        <span className="mt-[7px] ml-[15px] flex text-[24.500px] leading-[28px] text-[#555]">
                            上证
                            <span className="ml-[14px] tracking-[0.500px] text-[#f92626]">0.10%</span>
                        </span>
                    </div>
                    <div className="flex w-[592px]">
                        <NavItem label="交易">
                            <path d="M10 5.500a16 16 0 0 1 24.500 18.500M30 30.500A16 16 0 0 1 5.500 12M1.500 12.500L6 10V16M38.500 22.500L34.500 25.500V20" />
                            <path d="M14.500 11L20 17L25.500 11M20 17V26.500M14 17.500H26M14 21.800H26" />
                        </NavItem>
                        <NavItem label="发帖">
                            <path d="M26 2H8a4 4 0 0 0-4 4V30a4 4 0 0 0 4 4H32a4 4 0 0 0 4-4V12" />
                            <path d="M16 23.500L30 8M33 5L34.500 3" strokeWidth="3.600" />
                        </NavItem>
                        <NavItem label="功能">
                            <rect x="5" y="2" width="12.500" height="13.500" rx="2" />
                            <path d="M28 1.500L35 9L28 16.500L21 9Z" strokeLinejoin="round" />
                            <rect x="5" y="19.500" width="12.500" height="13.500" rx="2" />
                            <rect x="21.500" y="19.500" width="12.500" height="13.500" rx="2" />
                        </NavItem>
                        <NavItem label="设自选">
                            <circle cx="20" cy="18" r="16.200" />
                            <path d="M12 18h3M18.500 18h3M25 18h3" strokeWidth="3" />
                        </NavItem>
                    </div>
                </div>
                <div className="mt-auto mb-[16px] h-[10px] w-[273px] rounded-full bg-black" />
            </div>
        </div>
    );
};

export default App;
